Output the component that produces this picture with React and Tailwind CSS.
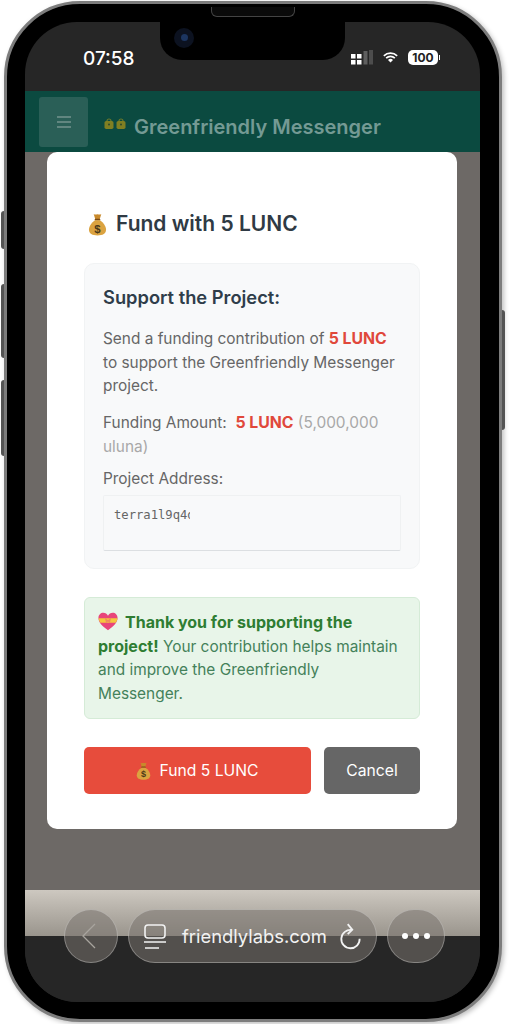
function MoneyBag({ className }) {
  return (
    <svg className={className} viewBox="0 0 20 24">
      <path d="M6 1c1.500 1 2.500.2 4 .2s2.500.8 4-.2l-1.800 6H7.800z" fill="#c98a2b" />
      <rect x="7" y="6" width="6" height="1.800" rx=".9" fill="#7a4a14" />
      <path d="M7.500 7.500C3.500 10 1 14 1 17.500 1 21.500 4.500 23.500 10 23.500s9-2 9-6c0-3.500-2.500-7.500-6.500-10z" fill="#dba340" />
      <text x="10" y="20.500" textAnchor="middle" fontSize="12" fontWeight="700" fill="#4a3a1a" fontFamily="Liberation Sans, sans-serif">$</text>
    </svg>
  )
}

function HeartGift({ className }) {
  return (
    <svg className={className} viewBox="0 0 22 20">
      <path d="M11 19.500C4 15 .5 11 .5 6 .5 2.800 3 .5 5.800.5 8 .5 10 1.700 11 3.800 12 1.700 14 .5 16.200.5 19 .5 21.500 2.800 21.500 6c0 5-3.500 9-10.500 13.500z" fill="#e8457a" />
      <path d="M.6 6.500h20.800c-.2 1.800-.9 3.300-2 5H2.600c-1.100-1.700-1.800-3.200-2-5z" fill="#f5c73d" />
      <path d="M7.500 5.500L11 8.500l3.500-3-1.500 6.500L11 10l-2 2z" fill="#f08a5d" />
    </svg>
  )
}

function Lock() {
  return (
    <svg className="w-[10px] h-[11px]" viewBox="0 0 10 11">
      <path d="M3 4.500V3a2 2 0 014 0v1.500" fill="none" stroke="#6d7a2a" strokeWidth="1.200" />
      <rect x=".5" y="3" width="9" height="8" rx="1.800" fill="#7f7f22" />
      <circle cx="5" cy="6.500" r="1" fill="#2f4a2c" />
    </svg>
  )
}

export default function App() {
  return (
    <div className="w-[513px] h-[1024px] bg-white overflow-hidden font-['Inter',sans-serif]">
      {/* Phone frame */}
      <div className="relative ml-[4px] mt-[1px] w-[498px] h-[1021px] rounded-[76px] bg-black border-[3px] border-[#7d7d7d] shadow-[2px_2px_5px_rgba(0,0,0,0.25)] p-[18px]">
        {/* side buttons */}
        <div className="absolute left-[-6px] top-[207px] w-[3px] h-[38px] bg-[#555] rounded-l" />
        <div className="absolute left-[-6px] top-[280px] w-[3px] h-[74px] bg-[#555] rounded-l" />
        <div className="absolute left-[-6px] top-[376px] w-[3px] h-[76px] bg-[#555] rounded-l" />
        <div className="absolute right-[-6px] top-[306px] w-[3px] h-[120px] bg-[#555] rounded-r" />
        <div className="absolute left-[204px] top-[3px] w-[84px] h-[10px] rounded-b-md border border-t-0 border-[#444] bg-[#0a0a0a]" />

        {/* Screen */}
        <div className="relative w-[455px] h-[980px] rounded-[52px] overflow-hidden bg-[#262626] flex flex-col">
          {/* Notch */}
          <div className="absolute left-[135px] top-0 w-[185px] h-[38px] bg-black rounded-b-[22px] flex items-center pl-[14px]">
            <div className="w-[20px] h-[20px] mb-[7px] rounded-full bg-[#0c1220] flex items-center justify-center">
              <div className="w-[7px] h-[7px] rounded-full bg-[#1c3560]" />
            </div>
          </div>

          {/* Status bar */}
          <div className="h-[69px] shrink-0 flex items-start justify-between pt-[25px] pl-[58px] pr-[40px]">
            <span className="text-[19px] leading-[23px] font-medium text-white">07:58</span>
            <div className="flex items-center gap-[10px] pt-[3px]">
              <svg className="w-[22px] h-[15px]" viewBox="0 0 22 15">
                <rect x="0" y="4" width="4.500" height="4.500" fill="#fff" />
                <rect x="6" y="4" width="4.500" height="4.500" fill="#fff" />
                <rect x="0" y="10" width="4.500" height="4.500" fill="#fff" />
                <rect x="6" y="10" width="4.500" height="4.500" fill="#fff" />
                <rect x="12.500" y="1" width="4" height="13.500" fill="#5f5f5f" />
                <rect x="18" y="0" width="4" height="14.500" fill="#4d4d4d" />
              </svg>
              <svg className="w-[15px] h-[11px]" viewBox="0 0 18 13">
                <path d="M1 4.500a11.500 11.500 0 0116 0M3.800 7.300a7.500 7.500 0 0110.400 0" fill="none" stroke="#fff" strokeWidth="2" />
                <path d="M9 12.500L6 9.600a4.300 4.300 0 016 0z" fill="#fff" />
              </svg>
              <div className="flex items-center">
                <div className="w-[30px] h-[15px] rounded-[5px] bg-white text-[#222] text-[12px] leading-[15px] font-bold text-center">100</div>
                <div className="w-[1px] h-[5px] bg-white ml-[1px]" />
              </div>
            </div>
          </div>

          {/* Dimmed app header */}
          <div className="h-[61px] shrink-0 bg-[#0b4a40] flex items-center pl-[14px]">
            <div className="w-[49px] h-[50px] rounded-[3px] bg-[#2a5f57] flex items-center justify-center">
              <svg className="w-[14px] h-[12px]" viewBox="0 0 14 12">
                <path d="M0 1h14M0 6h14M0 11h14" stroke="#74948f" strokeWidth="1.400" />
              </svg>
            </div>
            <div className="flex items-center gap-[2px] ml-[16px] mr-[8px] mt-[3px]">
              <Lock />
              <Lock />
            </div>
            <span className="text-[20px] leading-[24px] font-semibold text-[#749a94] mt-[10px]">Greenfriendly Messenger</span>
          </div>

          {/* Backdrop */}
          <div className="h-[738px] shrink-0 bg-[#6d6966] px-[22px]">
            <div className="w-[410px] h-[677px] bg-white rounded-[10px] px-[37px] pt-[57px]">
              <div className="flex items-center gap-[9px] h-[30px]">
                <MoneyBag className="w-[19px] h-[23px] ml-[4px]" />
                <h2 className="text-[21px] leading-[30px] font-semibold text-[#2f3a44]">Fund with 5 LUNC</h2>
              </div>

              {/* Info box */}
              <div className="mt-[24px] h-[306px] rounded-[10px] bg-[#f8f9fa] border border-[#f1f3f4] px-[18px] pt-[21px]">
                <h3 className="text-[18.300px] leading-[24px] font-semibold text-[#2f3d4a]">Support the Project:</h3>
                <p className="mt-[18px] text-[15.400px] leading-[23.700px] text-[#666]">
                  Send a funding contribution of <strong className="font-bold text-[15.800px] text-[#e0483b]">5 LUNC</strong> to support the Greenfriendly Messenger project.
                </p>
                <p className="mt-[13px] text-[15.400px] leading-[24px] text-[#666]">
                  Funding Amount:{'\u00a0 '}<strong className="font-bold text-[15.800px] text-[#e0483b]">5 LUNC</strong> <span className="text-[#a8a8a8]">(5,000,000 uluna)</span>
                </p>
                <p className="mt-[8px] text-[15.400px] leading-[24px] text-[#666]">Project Address:</p>
                <div className="mt-[4px] h-[56px] w-[298px] rounded-[2px] bg-[#f8f9fa] border border-[#eff1f2] border-b-[#dcdfe2] pl-[10px] pt-[11px]">
                  <div className="w-[76px] overflow-hidden whitespace-nowrap font-['DejaVu_Sans_Mono',monospace] text-[12.200px] leading-[16px] text-[#666]">terra1l9q4d</div>
                </div>
              </div>

              {/* Thank you box */}
              <div className="mt-[28px] h-[122px] rounded-[6px] bg-[#e8f5e9] border border-[#d5ebd7] pl-[13px] pr-[14px] pt-[13px] text-[15.400px] leading-[23.700px] text-[#44815a]">
                <HeartGift className="inline-block w-[20px] h-[19px] mr-[7px] align-[-3px]" />
                <strong className="font-bold text-[16px] text-[#2e7d32]">Thank you for supporting the project!</strong> Your contribution helps maintain and improve the Greenfriendly Messenger.
              </div>

              {/* Buttons */}
              <div className="mt-[28px] flex gap-[13px]">
                <button className="w-[227px] h-[47px] rounded-[5px] bg-[#e74c3c] text-white text-[15.700px] font-normal flex items-center justify-center gap-[8px]">
                  <MoneyBag className="w-[15px] h-[20px]" />
                  Fund 5 LUNC
                </button>
                <button className="w-[96px] h-[47px] rounded-[5px] bg-[#666] text-white text-[15.700px] font-normal">Cancel</button>
              </div>
            </div>
          </div>

          {/* Browser chin */}
          <div className="h-[46px] shrink-0 bg-gradient-to-b from-[#cdc8c0] to-[#9a958d]" />
          <div className="flex-1 bg-[#262626]" />

          {/* Floating browser controls */}
          <div className="absolute left-[39px] top-[887px] flex items-center">
            <div className="w-[54px] h-[54px] rounded-full border border-white/30 bg-[#78736e]/55 flex items-center justify-center pr-[4px]">
              <svg className="w-[16px] h-[26px]" viewBox="0 0 16 26">
                <path d="M14 1L2 13l12 12" fill="none" stroke="#a8a49e" strokeWidth="1.300" />
              </svg>
            </div>
            <div className="w-[249px] h-[54px] ml-[10px] rounded-full border border-white/30 bg-[#78736e]/55 flex items-center pl-[15px]">
              <svg className="w-[22px] h-[25px]" viewBox="0 0 22 25">
                <rect x="1" y="1" width="20" height="13" rx="3" fill="none" stroke="#f2f2f2" strokeWidth="1.600" />
                <path d="M0 18h22M1 24h14" stroke="#f2f2f2" strokeWidth="1.600" />
              </svg>
              <span className="ml-[16px] text-[18.400px] leading-[24px] text-[#f2f2f2]">friendlylabs.com</span>
              <svg className="w-[22px] h-[28px] ml-[12px]" viewBox="0 0 24 28">
                <path d="M14 7.500A10 10 0 1 0 22.500 17" fill="none" stroke="#f2f2f2" strokeWidth="2" />
                <path d="M9.500 1l5 6-5 5" fill="none" stroke="#f2f2f2" strokeWidth="2" />
              </svg>
            </div>
            <div className="w-[58px] h-[54px] ml-[10px] rounded-full border border-white/30 bg-[#78736e]/55 flex items-center justify-center gap-[5px]">
              <div className="w-[6px] h-[6px] rounded-full bg-white" />
              <div className="w-[6px] h-[6px] rounded-full bg-white" />
              <div className="w-[6px] h-[6px] rounded-full bg-white" />
            </div>
          </div>
        </div>
      </div>
    </div>
  )
}
